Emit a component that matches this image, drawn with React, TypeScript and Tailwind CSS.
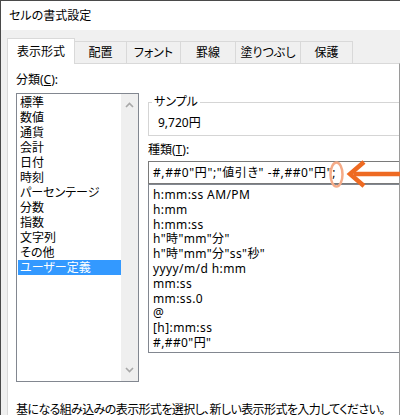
import React from "react";

const categories = [
  "標準",
  "数値",
  "通貨",
  "会計",
  "日付",
  "時刻",
  "パーセンテージ",
  "分数",
  "指数",
  "文字列",
  "その他",
  "ユーザー定義",
];

const formats = [
  "h:mm:ss AM/PM",
  "h:mm",
  "h:mm:ss",
  'h"時"mm"分"',
  'h"時"mm"分"ss"秒"',
  "yyyy/m/d h:mm",
  "mm:ss",
  "mm:ss.0",
  "@",
  "[h]:mm:ss",
  '#,##0"円"',
];

const tabs = [
  { label: "配置", w: "w-[52px]" },
  { label: "フォント", w: "w-[54px]" },
  { label: "罫線", w: "w-[55px]" },
  { label: "塗りつぶし", w: "w-[65px]" },
  { label: "保護", w: "w-[52px]" },
];

export default function App() {
  return (
    <div className="relative w-[400px] h-[415px] overflow-hidden bg-white border-t border-l border-[#4a4a4a] text-black text-[12px] font-['Noto_Sans','Noto_Sans_CJK_JP',sans-serif] [font-feature-settings:'palt']">
      {/* title bar */}
      <div className="h-[29px] flex items-center pl-[8px] text-[12px] leading-none">
        セルの書式設定
      </div>

      <div className="bg-[#f0f0f0] pl-[6px] h-[386px] flex flex-col">
        {/* tabs */}
        <div className="flex items-end h-[33px] shrink-0">
          <div className="relative z-10 -mb-px h-[26px] w-[68px] bg-white border-l border-t border-r border-[#d9d9d9] flex items-center justify-center leading-none">
            表示形式
          </div>
          {tabs.map((t) => (
            <div
              key={t.label}
              className={`${t.w} h-[22px] bg-[#f0f0f0] border-t border-r border-[#d9d9d9] flex items-center justify-center leading-none`}
            >
              {t.label}
            </div>
          ))}
        </div>

        {/* panel */}
        <div className="flex-1 bg-white border-l border-t border-[#d9d9d9] border-r border-r-[#9a9a9a] pl-[8px] pt-[8px]">
          <div className="flex">
            {/* left column */}
            <div className="w-[123px] shrink-0">
              <div className="h-[16px] leading-[16px]">
                分類(<span className="underline">C</span>):
              </div>
              <div className="mt-[5px] h-[289px] border border-[#828790] flex">
                <div className="flex-1 pt-[1px]">
                  {categories.map((c) => {
                    const sel = c === "ユーザー定義";
                    return (
                      <div
                        key={c}
                        className={`h-[15px] leading-[15px] ml-[1px] pl-[2px] whitespace-nowrap ${
                          sel ? "bg-[#3399ff] text-white" : ""
                        }`}
                      >
                        {c}
                      </div>
                    );
                  })}
                </div>
                <div className="w-[17px] bg-[#efefef] flex flex-col items-center justify-between py-[8px]">
                  <svg width="9" height="6" viewBox="0 0 9 6">
                    <path d="M1 5 L4.5 1.5 L8 5" fill="none" stroke="#a8a8a8" strokeWidth="1.6" />
                  </svg>
                  <svg width="9" height="6" viewBox="0 0 9 6">
                    <path d="M1 1 L4.5 4.5 L8 1" fill="none" stroke="#a8a8a8" strokeWidth="1.6" />
                  </svg>
                </div>
              </div>
            </div>

            {/* right column */}
            <div className="ml-[9px] flex-1 min-w-0">
              <div className="relative mt-[30px] h-[34px] border-l border-t border-b border-[#d5d5d5]">
                <div className="absolute -top-[9px] left-[3px] bg-white px-[2px] leading-[16px]">
                  サンプル
                </div>
                <div className="pl-[9px] pt-[12px] leading-[16px]">9,720円</div>
              </div>
              <div className="mt-[6px] h-[16px] leading-[16px]">
                種類(<span className="underline">T</span>):
              </div>
              <div className="mt-[3px] h-[23px] border-l border-t border-b border-[#7a7a7a] pl-[4px] flex items-center whitespace-nowrap tracking-[0.6px]">
                #,##0"円";"値引き" -#,##0"円";
              </div>
              <div className="h-[169px] border-l border-t border-b border-[#828790] pl-[4px] pt-[3px] tracking-[0.4px]">
                {formats.map((f) => (
                  <div key={f} className="h-[14.8px] leading-[14.8px] whitespace-nowrap">
                    {f}
                  </div>
                ))}
              </div>
            </div>
          </div>

          <div className="mt-[21px] leading-[14px] whitespace-nowrap tracking-[-0.6px]">
            基になる組み込みの表示形式を選択し、新しい表示形式を入力してください。
          </div>
        </div>
      </div>

      {/* annotation overlay */}
      <svg
        className="absolute -top-px -left-px pointer-events-none"
        width="400"
        height="415"
        viewBox="0 0 400 415"
      >
        <ellipse cx="336.5" cy="174.5" rx="6" ry="12" fill="none" stroke="#f5ab88" strokeWidth="2.5" />
        <line x1="354" y1="174" x2="401" y2="174" stroke="#ee6a22" strokeWidth="4.5" />
        <polyline
          points="364,162 350,174 364,186"
          fill="none"
          stroke="#ee6a22"
          strokeWidth="4.5"
          strokeLinejoin="miter"
        />
      </svg>
    </div>
  );
}
